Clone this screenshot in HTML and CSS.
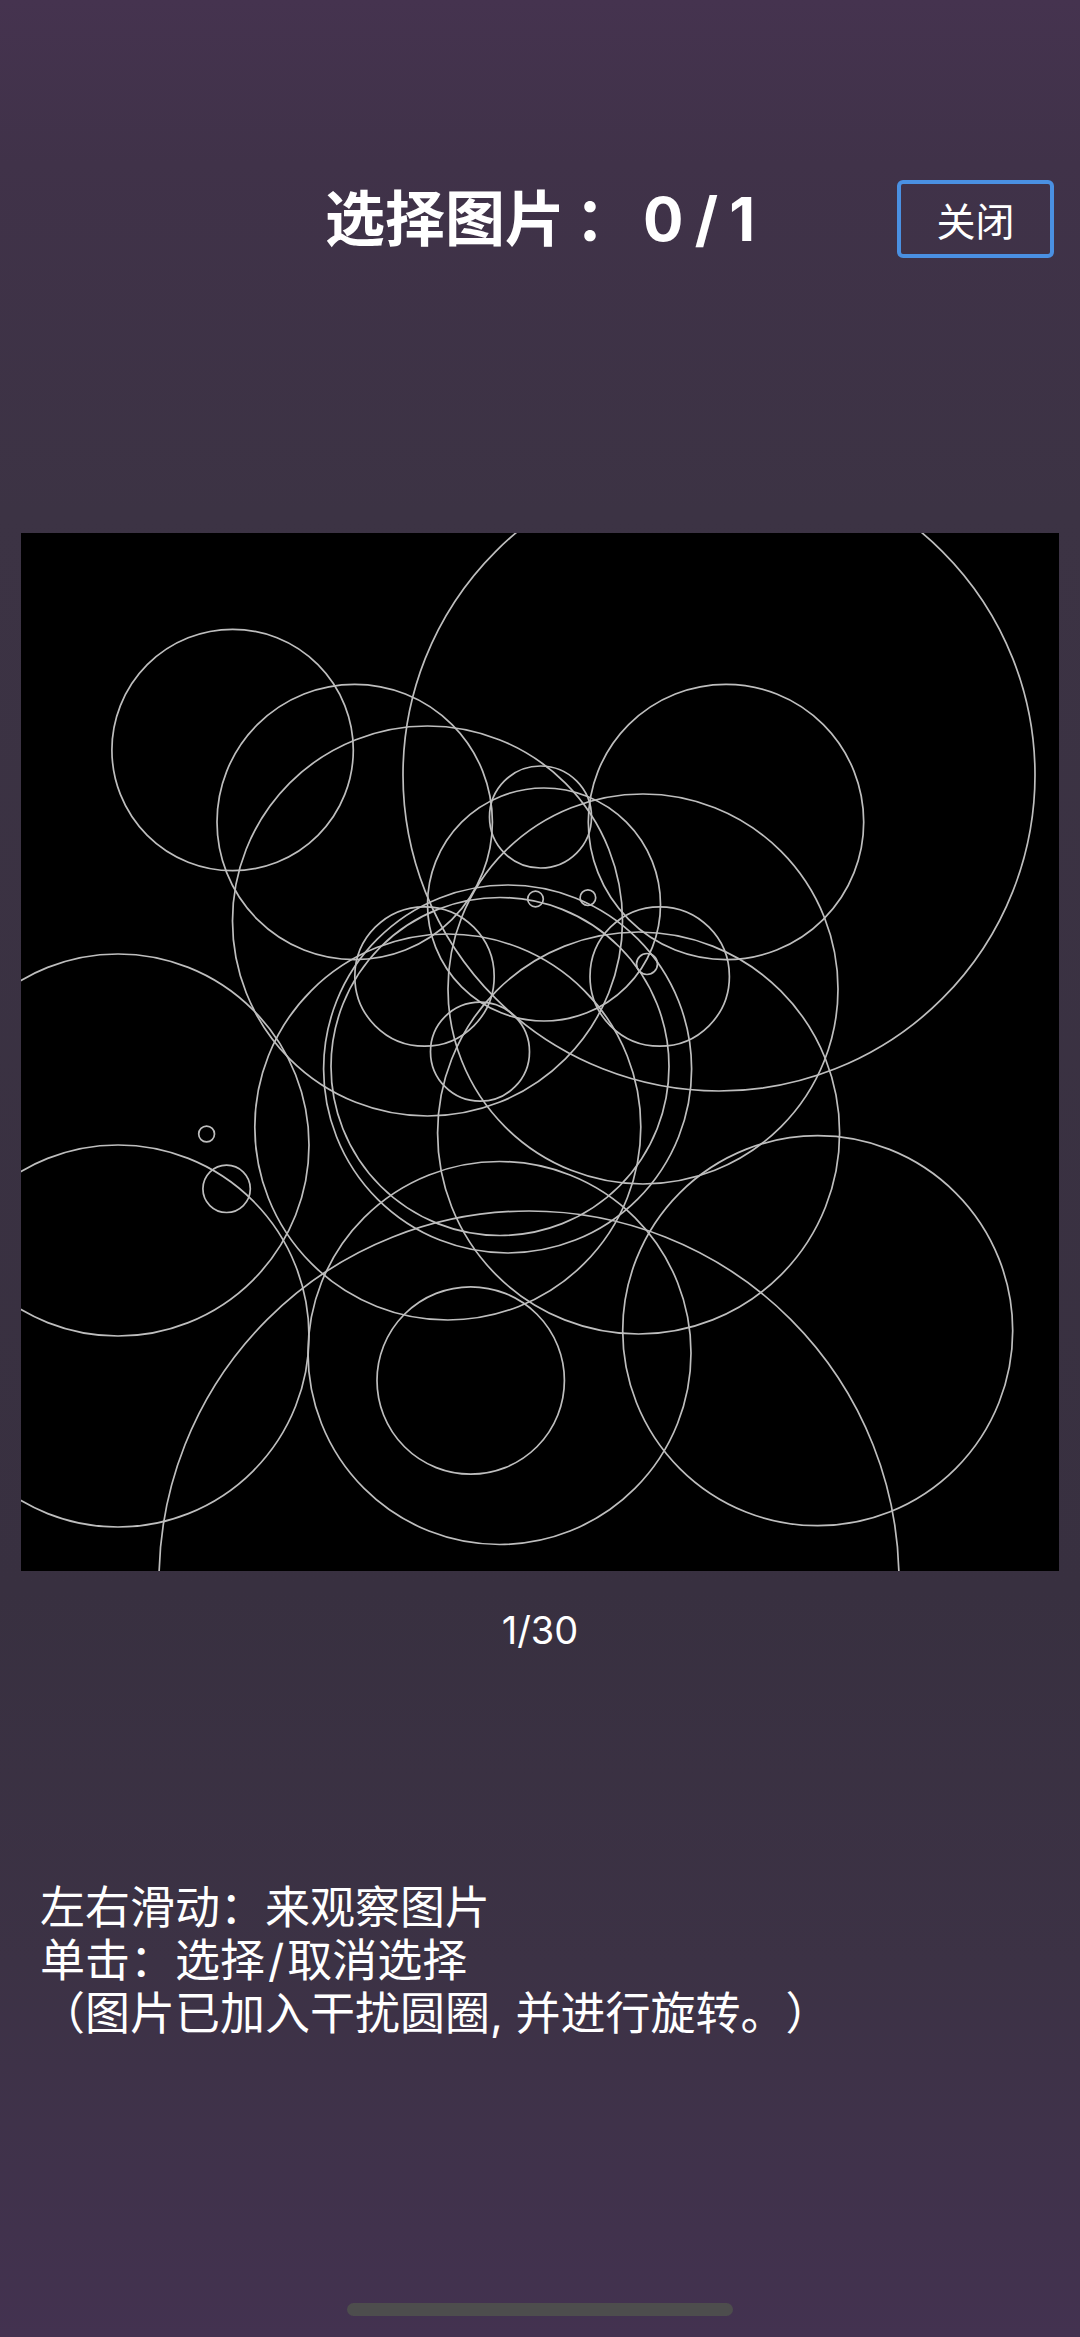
FILE: index.html
```html
<!DOCTYPE html>
<html lang="zh-CN">
<head>
    <meta charset="UTF-8">
    <meta name="viewport" content="width=device-width, initial-scale=1.0">
    <title>选择图片</title>
    <link rel="stylesheet" href="styles.css">
</head>
<body>
    <header class="top-bar">
        <h1 class="title">选择图片<span class="colon">：</span><span class="count">0 / 1</span></h1>
        <button class="close-button">关闭</button>
    </header>

    <div class="picture">
        <!-- viewBox keeps the circle coordinates in page pixels -->
        <svg class="circles" viewBox="21 533 1038 1038" fill="none" stroke="#bebebe" stroke-width="1.7">
            <circle cx="232.6" cy="750" r="120.7"/>
            <circle cx="354.7" cy="822" r="137.7"/>
            <circle cx="427.5" cy="921" r="195"/>
            <circle cx="719" cy="775" r="316"/>
            <circle cx="726" cy="822" r="137.7"/>
            <circle cx="540.5" cy="817" r="51"/>
            <circle cx="544" cy="904.5" r="116.5"/>
            <circle cx="643" cy="989" r="195"/>
            <circle cx="659.7" cy="976.5" r="69.7"/>
            <circle cx="638.6" cy="1133" r="201"/>
            <circle cx="507.6" cy="1069" r="184"/>
            <circle cx="500" cy="1066.5" r="169"/>
            <circle cx="424.5" cy="976.5" r="69.7"/>
            <circle cx="480" cy="1051.7" r="49.5"/>
            <circle cx="447.8" cy="1127" r="193"/>
            <circle cx="118" cy="1145" r="191"/>
            <circle cx="118" cy="1336" r="191"/>
            <circle cx="499.5" cy="1353" r="191.5"/>
            <circle cx="470.7" cy="1380.5" r="93.7"/>
            <circle cx="817.7" cy="1330.7" r="195"/>
            <circle cx="529" cy="1581" r="370"/>
            <circle cx="206.6" cy="1134" r="7.9"/>
            <circle cx="226.6" cy="1188.8" r="23.7"/>
            <circle cx="587.9" cy="897.7" r="7.8"/>
            <circle cx="535.5" cy="899" r="7.8"/>
            <circle cx="647" cy="964" r="10.5"/>
        </svg>
    </div>

    <p class="page-number">1/30</p>

    <div class="hint">
        <p>左右滑动：来观察图片</p>
        <p>单击：选择<span class="slash">/</span>取消选择</p>
        <p>（图片已加入干扰圆圈, 并进行旋转。）</p>
    </div>

    <div class="home-bar"></div>
</body>
</html>
```

FILE: styles.css
```css
body {
    display: flex;
    flex-direction: column;
    height: 100vh;
    margin: 0;
    color: #ffffff;
    background: linear-gradient(to bottom, #45334f 0%, #403249 7%, #3c3344 22%, #383040 68%, #3c3245 84%, #433250 100%);
    font-family: "Inter", "Noto Sans CJK SC", sans-serif;
    text-spacing-trim: space-all;
}
.top-bar {
    display: grid;
    grid-template-columns: 1fr auto 1fr;
    align-items: center;
    padding-top: 180px;
}
.title {
    grid-column: 2;
    margin: 0;
    font-size: 60px;
    font-weight: 700;
    line-height: 78px;
    white-space: nowrap;
}
.colon {
    margin-left: 10px;
}
.count {
    margin-left: 8px;
    word-spacing: -3px;
}
.close-button {
    grid-column: 3;
    justify-self: end;
    width: 157px;
    height: 78px;
    margin-right: 26px;
    padding: 0;
    color: #ffffff;
    background: transparent;
    border: 4px solid #4a90e2;
    border-radius: 6px;
    font-family: inherit;
    font-size: 39px;
}
.picture {
    width: 1038px;
    height: 1038px;
    margin: 275px 0 0 21px;
    background-color: #000000;
}
.circles {
    display: block;
    width: 100%;
    height: 100%;
}
.page-number {
    margin: 36px 0 0;
    font-size: 38px;
    line-height: 46px;
    text-align: center;
}
.hint {
    margin-top: 228px;
    padding-left: 40px;
    font-size: 45px;
    line-height: 53px;
}
.hint p {
    margin: 0;
}
.slash {
    margin: 0 3px;
}
.home-bar {
    width: 386px;
    height: 13px;
    margin: auto auto 21px;
    background-color: #4d4d4d;
    border-radius: 7px;
}
```
